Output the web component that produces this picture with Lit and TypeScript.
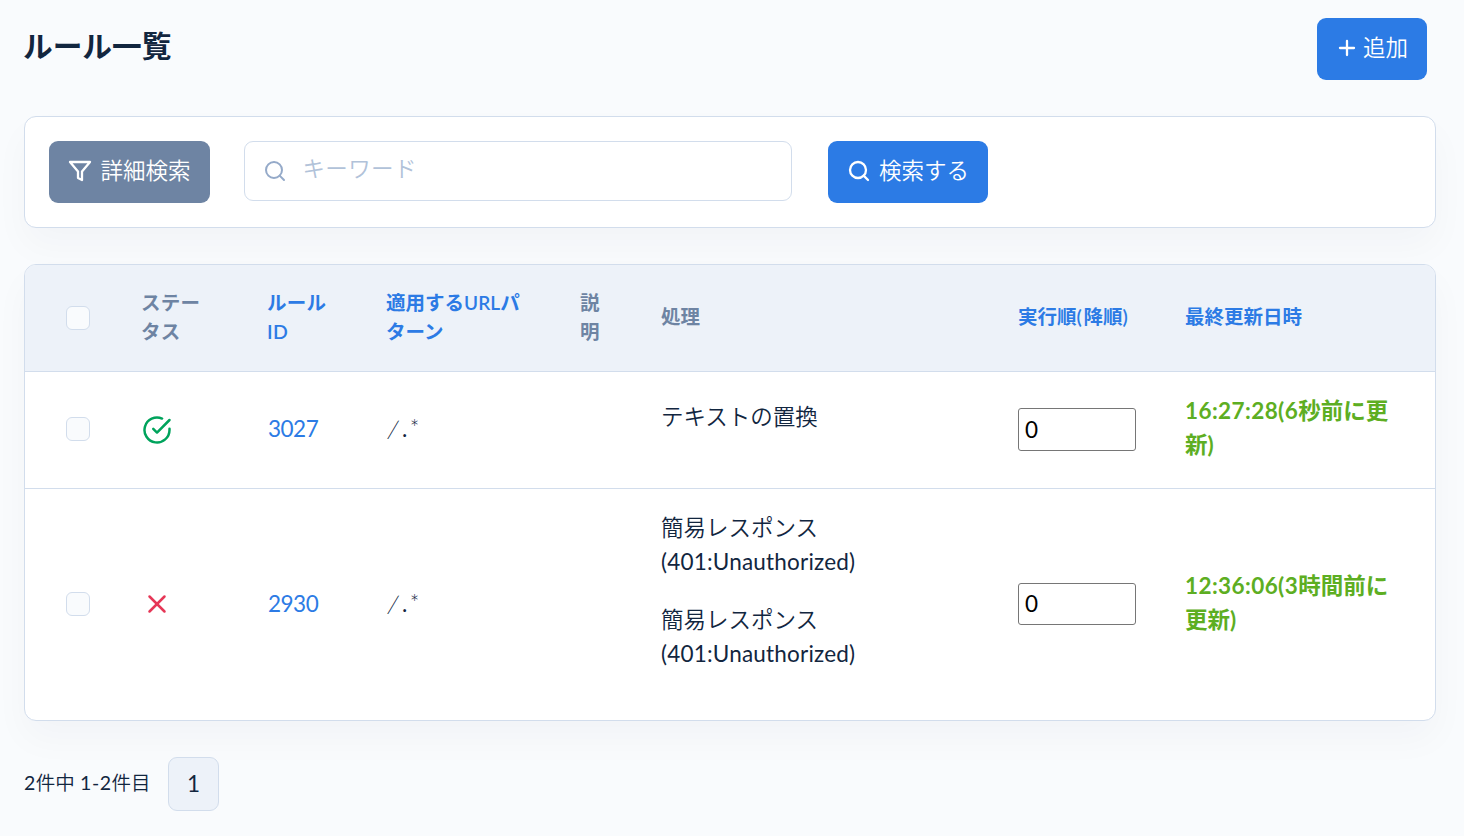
import { LitElement, html, css, svg } from "lit";
import { customElement } from "lit/decorators.js";

const icons = {
  filter: svg`<polygon points="22 3 2 3 10 12.46 10 19 14 21 14 12.46 22 3"></polygon>`,
  search: svg`<circle cx="11" cy="11" r="8"></circle><line x1="21" y1="21" x2="16.65" y2="16.65"></line>`,
  plus: svg`<line x1="12" y1="5" x2="12" y2="19"></line><line x1="5" y1="12" x2="19" y2="12"></line>`,
  check: svg`<path d="M22 11.08V12a10 10 0 1 1-5.93-9.14"></path><polyline points="22 4 12 14.01 9 11.01"></polyline>`,
  x: svg`<line x1="18" y1="6" x2="6" y2="18"></line><line x1="6" y1="6" x2="18" y2="18"></line>`,
};

const icon = (name: keyof typeof icons, cls = "") =>
  html`<svg class="icon ${cls}" viewBox="0 0 24 24" aria-hidden="true">${icons[name]}</svg>`;

interface Rule {
  id: string;
  active: boolean;
  pattern: unknown;
  actions: unknown[];
  updated: unknown;
}

const simpleResponse = html`簡易レスポンス<br /><span class="latin">(401:Unauthorized)</span>`;
const anyPath = html`<span class="slash">/</span>.<span class="star">*</span>`;

const rules: Rule[] = [
  {
    id: "3027",
    active: true,
    pattern: anyPath,
    actions: [html`テキストの置換`],
    updated: html`<span class="time">16:27:28(6</span>秒前に更<br />新)`,
  },
  {
    id: "2930",
    active: false,
    pattern: anyPath,
    actions: [simpleResponse, simpleResponse],
    updated: html`<span class="time">12:36:06(3</span>時間前に<br />更新)`,
  },
];

@customElement("app-root")
export class AppRoot extends LitElement {
  static styles = css`
    :host {
      display: block;
      box-sizing: border-box;
      height: 836px;
      padding: 18px 28px 0 24px;
      overflow: hidden;
      background: #f9fbfd;
      color: #12263f;
      font-family: Lato, "Noto Sans CJK JP", sans-serif;
      font-size: 22.5px;
      line-height: 34px;
    }
    * {
      box-sizing: border-box;
    }
    .icon {
      width: 24px;
      height: 24px;
      flex: none;
      fill: none;
      stroke: currentColor;
      stroke-width: 2;
      stroke-linecap: round;
      stroke-linejoin: round;
    }
    .head {
      display: flex;
      justify-content: space-between;
      align-items: flex-start;
      padding-right: 9px;
      margin-bottom: 36px;
    }
    h1 {
      margin: 8px 0 0 -1px;
      font-size: 29.7px;
      line-height: 40px;
      font-weight: 700;
    }
    .btn {
      display: flex;
      align-items: center;
      height: 62px;
      padding: 0 18px 2px;
      border: 0;
      border-radius: 9px;
      background: #2c7be5;
      color: #fff;
      font: inherit;
      font-weight: 350;
      white-space: nowrap;
    }
    .btn.add {
      width: 110px;
      gap: 4px;
    }
    .btn.filter {
      width: 161px;
      gap: 9px;
      padding-left: 18.5px;
      background: #6e84a3;
    }
    .btn.find {
      width: 160px;
      gap: 8px;
      padding-left: 19px;
    }
    .btn .icon {
      margin-bottom: 1px;
      stroke-width: 2.3;
    }
    .card {
      border: 1px solid #d2ddec;
      border-radius: 12px;
      background: #fff;
      box-shadow: 0 18px 36px rgba(18, 38, 63, 0.03);
    }
    .search {
      display: flex;
      align-items: flex-start;
      height: 112px;
      padding: 24px;
      margin-bottom: 36px;
    }
    .field {
      display: flex;
      align-items: center;
      gap: 15.5px;
      width: 548px;
      height: 60px;
      margin: 0 36px 0 34px;
      padding: 0 18px 1px;
      border: 1px solid #d2ddec;
      border-radius: 9px;
      color: #95aac9;
    }
    .field .placeholder {
      color: #b1c2d9;
      font-weight: 350;
      letter-spacing: 0.35px;
      padding-bottom: 3px;
    }
    .table {
      overflow: hidden;
    }
    .shell {
      border-radius: 12px;
      margin-bottom: 36px;
    }
    .row {
      display: grid;
      grid-template-columns: 76px 126px 118px 194px 81px 357px 167px 1fr;
      align-items: center;
      padding: 0 0 2px 41px;
      border-top: 1px solid #d2ddec;
      font-weight: 350;
    }
    .row.header {
      height: 106px;
      border-top: 0;
      background: #edf2f9;
      color: #6e84a3;
      font-size: 19.5px;
      line-height: 29px;
      font-weight: 600;
    }
    .header .single {
      padding-bottom: 1.5px;
    }
    .kana {
      margin-left: -1px;
      letter-spacing: 0.3px;
    }
    .row.short {
      height: 117px;
    }
    .row.tall {
      height: 232px;
    }
    .link {
      color: #2c7be5;
    }
    .paren {
      letter-spacing: 1.7px;
    }
    .header .url {
      font-size: 19px;
      letter-spacing: 0.1px;
    }
    .id {
      font-weight: 400;
      letter-spacing: -0.5px;
    }
    .latin {
      font-weight: 400;
      letter-spacing: 0.2px;
    }
    .pattern {
      display: flex;
      gap: 2.5px;
      font-weight: 400;
    }
    .slash {
      font-weight: 300;
      font-size: 24px;
      transform: skewX(-10deg);
      margin: 0 1px 0 2px;
    }
    .star {
      font-weight: 300;
    }
    .check {
      width: 24px;
      height: 24px;
      border: 1px solid #d2ddec;
      border-radius: 6px;
      background: #f9fbfd;
    }
    .header .check {
      margin-top: 2px;
    }
    .status {
      display: flex;
      padding-top: 1px;
    }
    .status .icon {
      width: 30px;
      height: 30px;
      stroke-width: 2;
    }
    .ok {
      color: #00a35c;
    }
    .ng {
      color: #e63757;
    }
    .actions p {
      margin: 0 0 23px;
      line-height: 34.25px;
    }
    .tall .actions {
      padding-bottom: 2px;
    }
    .order {
      width: 118px;
      height: 43px;
      padding: 0 6px;
      border: 1px solid #767676;
      border-radius: 3px;
      background: #fff;
      color: #000;
      line-height: 41px;
      font-weight: 400;
    }
    .tall .order {
      height: 42px;
      margin-top: 1px;
      line-height: 39px;
    }
    .date {
      color: #5dae22;
      font-weight: 700;
      padding-bottom: 2px;
    }
    .time {
      letter-spacing: 0.4px;
    }
    .pager {
      display: flex;
      align-items: center;
      gap: 18px;
      font-size: 19.5px;
      font-weight: 350;
    }
    .count {
      width: 126px;
      padding-bottom: 2px;
      white-space: nowrap;
    }
    .num {
      font-weight: 400;
      letter-spacing: 0.5px;
    }
    .page {
      display: flex;
      align-items: center;
      justify-content: center;
      width: 51px;
      height: 54px;
      padding-bottom: 1px;
      border: 1px solid #d2ddec;
      border-radius: 9px;
      background: #edf2f9;
      font-size: 22.5px;
      font-weight: 400;
    }
  `;

  render() {
    return html`
      <header class="head">
        <h1>ルール一覧</h1>
        <button class="btn add">${icon("plus")}<span>追加</span></button>
      </header>
      <section class="card search">
        <button class="btn filter">${icon("filter")}<span>詳細検索</span></button>
        <div class="field">${icon("search")}<span class="placeholder">キーワード</span></div>
        <button class="btn find">${icon("search")}<span>検索する</span></button>
      </section>
      <section class="card table shell">
        <div class="row header">
          <div class="check"></div>
          <div class="kana">ステー<br />タス</div>
          <div class="link kana">ルール<br />ID</div>
          <div class="link">適用する<span class="url">URL</span>パ<br />ターン</div>
          <div>説<br />明</div>
          <div class="single">処理</div>
          <div class="link single">実行順<span class="paren">(</span>降順<span class="paren">)</span></div>
          <div class="link single">最終更新日時</div>
        </div>
        ${rules.map(
          (r) => html`
            <div class="row ${r.actions.length > 1 ? "tall" : "short"}">
              <div class="check"></div>
              <div class="status ${r.active ? "ok" : "ng"}">${icon(r.active ? "check" : "x")}</div>
              <div class="link id">${r.id}</div>
              <div class="pattern">${r.pattern}</div>
              <div></div>
              <div class="actions">${r.actions.map((a) => html`<p>${a}</p>`)}</div>
              <div class="order">0</div>
              <div class="date">${r.updated}</div>
            </div>
          `
        )}
      </section>
      <nav class="pager">
        <span class="count"><span class="num">2</span>件中 <span class="num">1-2</span>件目</span>
        <span class="page">1</span>
      </nav>
    `;
  }
}
